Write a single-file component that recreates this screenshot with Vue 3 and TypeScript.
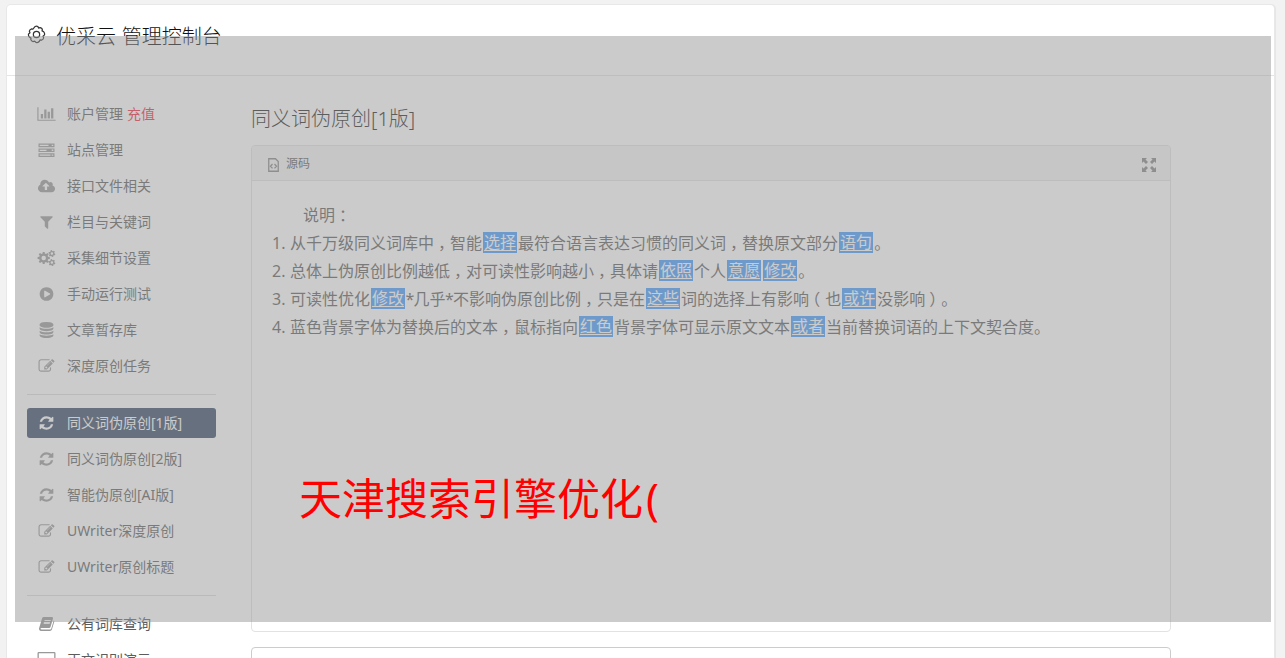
<template>
  <div class="page">
    <div class="panel">
      <header class="panel__header">
        <svg class="panel__logo" viewBox="0 0 20 20">
          <path d="M8.6 1.5Q10 .7 11.4 1.5L12.2 3.1L14 2.7Q15.7 3 16.1 4.5L15.9 6.2L17.6 7.2Q18.9 8.6 18.4 10.5L16.9 11.7L17.5 13.4Q17.2 15.2 15.6 15.8L13.8 15.6L12.8 17.4Q11.3 18.8 9.5 18.4L8 17L6.4 17.4Q4.6 17.1 4 15.4L4.2 13.8L2.5 12.7Q1.2 11.2 1.6 9.5L3.1 8.2L2.5 6.5Q2.8 4.8 4.5 4.2L6.2 4.4Z" />
          <circle cx="10" cy="10" r="3.3" />
        </svg>
        <h1 class="panel__title">优采云 管理控制台</h1>
      </header>

      <div class="panel__body">
        <nav class="menu">
          <div v-for="(group, index) in groups" :key="index" class="menu__group">
            <a
              v-for="item in group"
              :key="item.text"
              class="menu__item"
              :class="{ 'menu__item--active': item.text === current }"
              @click="current = item.text"
            >
              <svg class="menu__icon" :viewBox="icons[item.icon].box">
                <path :d="icons[item.icon].path" fill-rule="evenodd" />
              </svg>
              <span>{{ item.text }}</span>
              <span v-if="item.extra" class="menu__extra">{{ item.extra }}</span>
            </a>
          </div>
        </nav>

        <main class="content">
          <h2 class="content__title">同义词伪原创[1版]</h2>
          <section class="editor">
            <div class="editor__toolbar">
              <svg class="editor__source" viewBox="0 0 11 14">
                <path d="M.75.75H7.5L10.25 3.5V13.25H.75ZM4.5 6L2.5 8.2L4.5 10.4M6.5 6L8.5 8.2L6.5 10.4" />
              </svg>
              <span>源码</span>
              <svg class="editor__expand" viewBox="0 0 14 14">
                <path d="M0 0H5L3.5 1.5L6 4L4 6L1.5 3.5L0 5ZM14 0V5L12.5 3.5L10 6L8 4L10.5 1.5L9 0ZM0 14V9L1.5 10.5L4 8L6 10L3.5 12.5L5 14ZM14 14H9L10.5 12.5L8 10L10 8L12.5 10.5L14 9Z" />
              </svg>
            </div>
            <div class="editor__text">
              <p class="editor__intro">说明<span class="mid">：</span></p>
              <p v-for="(line, n) in lines" :key="n" class="editor__line">
                <span class="editor__number">{{ n + 1 }}.</span>
                <span
                  v-for="(part, i) in split(line)"
                  :key="i"
                  :class="part.kind"
                >{{ part.text }}</span>
              </p>
            </div>
          </section>
          <section class="result"></section>
        </main>
      </div>
    </div>

    <div class="cover">
      <span class="cover__text">天津搜索引擎优化<span class="cover__bracket">(</span></span>
    </div>
  </div>
</template>

<script setup lang="ts">
import { ref } from 'vue'

interface MenuItem {
  text: string
  icon: string
  extra?: string
}

interface Part {
  text: string
  kind: string
}

const current = ref('同义词伪原创[1版]')

const groups: MenuItem[][] = [
  [
    { text: '账户管理', icon: 'chart', extra: '充值' },
    { text: '站点管理', icon: 'server' },
    { text: '接口文件相关', icon: 'cloud' },
    { text: '栏目与关键词', icon: 'filter' },
    { text: '采集细节设置', icon: 'cogs' },
    { text: '手动运行测试', icon: 'play' },
    { text: '文章暂存库', icon: 'database' },
    { text: '深度原创任务', icon: 'edit' },
  ],
  [
    { text: '同义词伪原创[1版]', icon: 'refresh' },
    { text: '同义词伪原创[2版]', icon: 'refresh' },
    { text: '智能伪原创[AI版]', icon: 'refresh' },
    { text: 'UWriter深度原创', icon: 'edit' },
    { text: 'UWriter原创标题', icon: 'edit' },
  ],
  [
    { text: '公有词库查询', icon: 'book' },
    { text: '正文识别演示', icon: 'desktop' },
  ],
]

// {..} marks a replaced word
const lines = [
  '从千万级同义词库中，智能{选择}最符合语言表达习惯的同义词，替换原文部分{语句}。',
  '总体上伪原创比例越低，对可读性影响越小，具体请{依照}个人{意愿}{修改}。',
  '可读性优化{修改}*几乎*不影响伪原创比例，只是在{这些}词的选择上有影响（也{或许}没影响）。',
  '蓝色背景字体为替换后的文本，鼠标指向{红色}背景字体可显示原文文本{或者}当前替换词语的上下文契合度。',
]

const split = (line: string): Part[] =>
  line
    .split(/(\{.+?\}|[，（）*])/)
    .filter((s) => s !== '')
    .map((s) => {
      if (s.startsWith('{')) return { text: s.slice(1, -1), kind: 'word' }
      if (s === '，') return { text: s, kind: 'mid' }
      if (s === '（') return { text: s, kind: 'open' }
      if (s === '）') return { text: s, kind: 'close' }
      if (s === '*') return { text: s, kind: 'star' }
      return { text: s, kind: 'plain' }
    })

// closed outline of a toothed wheel with a round hole
const gear = (cx: number, cy: number, r: number, teeth: number, turn = 0) => {
  const step = (Math.PI * 2) / teeth
  const points: string[] = []
  for (let i = 0; i < teeth; i++) {
    const a = i * step + turn
    for (const [k, f] of [[-0.32, 0.74], [-0.2, 1], [0.2, 1], [0.32, 0.74]]) {
      const x = cx + Math.cos(a + k * step) * r * f
      const y = cy + Math.sin(a + k * step) * r * f
      points.push(`${x.toFixed(2)} ${y.toFixed(2)}`)
    }
  }
  const h = r * 0.36
  return `M${points.join('L')}ZM${cx - h} ${cy}a${h} ${h} 0 1 0 ${h * 2} 0a${h} ${h} 0 1 0 ${-h * 2} 0Z`
}

const icons: Record<string, { box: string; path: string }> = {
  chart: {
    box: '0 0 2048 1792',
    path: 'M640 896v512h-256v-512h256zm384-512v1024h-256v-1024h256zm1024 1152v128h-2048v-1536h128v1408h1920zm-640-896v768h-256v-768h256zm384-384v1152h-256v-1152h256z',
  },
  server: {
    box: '0 0 18 16',
    path: 'M1 1.5H17V5.2H1ZM2.2 2.8V4H11V2.8ZM14.2 2.7V4H15.8V2.7ZM1 6.4H17V10.1H1ZM2.2 7.7V8.9H9V7.7ZM14.2 7.6V8.9H15.8V7.6ZM1 11.3H17V15H1ZM2.2 12.6V13.8H13V12.6ZM14.2 12.5V13.8H15.8V12.5Z',
  },
  cloud: {
    box: '0 0 1920 1792',
    path: 'M1280 928q0-14-9-23l-352-352q-9-9-23-9t-23 9l-351 351q-10 12-10 24 0 14 9 23t23 9h224v352q0 13 9.5 22.5t22.5 9.5h192q13 0 22.5-9.5t9.5-22.5v-352h224q13 0 22.5-9.5t9.5-22.5zm640 288q0 159-112.5 271.5t-271.5 112.5h-1088q-185 0-316.5-131.5t-131.5-316.5q0-130 70-240t188-165q-2-30-2-43 0-212 150-362t362-150q156 0 285.5 87t188.5 231q71-62 166-62 106 0 181 75t75 181q0 76-41 138 130 31 213.5 135.5t83.5 238.5z',
  },
  filter: {
    box: '0 0 1792 1792',
    path: 'M1595 295q17 41-14 70l-493 493v742q0 42-39 59-13 5-25 5-27 0-45-19l-256-256q-19-19-19-45v-486l-493-493q-31-29-14-70 17-39 59-39h1280q42 0 59 39z',
  },
  cogs: {
    box: '0 0 18 16',
    path: gear(6.2, 8, 6.2, 8) + gear(14.4, 3.6, 3.5, 6, 0.3) + gear(14.4, 12.6, 3.5, 6, 0.3),
  },
  play: {
    box: '0 0 1792 1792',
    path: 'M896 128q209 0 385.5 103t279.5 279.5 103 385.5-103 385.5-279.5 279.5-385.5 103-385.5-103-279.5-279.5-103-385.5 103-385.5 279.5-279.5 385.5-103zm384 823q32-18 32-55t-32-55l-544-320q-31-19-64-1-32 19-32 56v640q0 37 32 56 16 8 32 8 17 0 32-9z',
  },
  database: {
    box: '0 0 1792 1792',
    path: 'M896 768q237 0 443-43t325-127v170q0 69-103 128t-280 93.5-385 34.5-385-34.5-280-93.5-103-128v-170q119 84 325 127t443 43zm0 768q237 0 443-43t325-127v170q0 69-103 128t-280 93.5-385 34.5-385-34.5-280-93.5-103-128v-170q119 84 325 127t443 43zm0-384q237 0 443-43t325-127v170q0 69-103 128t-280 93.5-385 34.5-385-34.5-280-93.5-103-128v-170q119 84 325 127t443 43zm0-1152q208 0 385 34.5t280 93.5 103 128v128q0 69-103 128t-280 93.5-385 34.5-385-34.5-280-93.5-103-128v-128q0-69 103-128t280-93.5 385-34.5z',
  },
  edit: {
    box: '0 0 1792 1792',
    path: 'M888 1184l116-116-152-152-116 116v56h96v96h56zm440-720q-16-16-33 1l-350 350q-17 17-1 33t33-1l350-350q17-17 1-33zm80 594v190q0 119-84.5 203.5t-203.5 84.5h-832q-119 0-203.5-84.5t-84.5-203.5v-832q0-119 84.5-203.5t203.5-84.5h832q63 0 117 25 15 7 18 23 3 17-9 29l-49 49q-14 14-32 8-23-6-45-6h-832q-66 0-113 47t-47 113v832q0 66 47 113t113 47h832q66 0 113-47t47-113v-126q0-13 9-22l64-64q15-15 35-7t20 29zm-96-738l288 288-672 672h-288v-288zm444 132l-92 92-288-288 92-92q28-28 68-28t68 28l152 152q28 28 28 68t-28 68z',
  },
  refresh: {
    box: '0 0 1792 1792',
    path: 'M1639 1056q0 5-1 7-64 268-268 434.5t-478 166.5q-146 0-282.5-55t-243.5-157l-129 129q-19 19-45 19t-45-19-19-45v-448q0-26 19-45t45-19h448q26 0 45 19t19 45-19 45l-137 137q71 66 161 102t187 36q134 0 250-65t186-179q11-17 53-117 8-23 30-23h192q13 0 22.5 9.5t9.5 22.5zm25-800v448q0 26-19 45t-45 19h-448q-26 0-45-19t-19-45 19-45l138-138q-148-137-349-137-134 0-250 65t-186 179q-11 17-53 117-8 23-30 23h-199q-13 0-22.5-9.5t-9.5-22.5v-7q65-268 270-434.5t480-166.5q146 0 284 55.5t245 156.5l130-129q19-19 45-19t45 19 19 45z',
  },
  book: {
    box: '0 0 16 16',
    path: 'M5.2 1H13.6Q14.8 1.2 14.5 2.4L12 11Q11.7 12 10.6 12H3Q1.9 12 2 12.8Q2.1 13.6 3.1 13.6H11.6Q12.5 13.6 12.8 12.6L15.2 4.4Q16 4.9 15.7 5.9L13.4 13.6Q12.9 15 11.4 15H2.8Q1.2 15 .6 13.4Q.3 12.4 .8 11.5L3.6 2.2Q4.1 1 5.2 1ZM6.2 4L5.9 5H12L12.3 4ZM5.4 6.6L5.1 7.6H11.2L11.5 6.6Z',
  },
  desktop: {
    box: '0 0 18 16',
    path: 'M1.3 0H16.7Q18 0 18 1.3V11.7Q18 13 16.7 13H11V14.5H12.5V16H5.5V14.5H7V13H1.3Q0 13 0 11.7V1.3Q0 0 1.3 0ZM1.3 1.3V10H16.7V1.3Z',
  },
}
</script>

<style>
body {
  margin: 0;
  overflow: hidden;
  background: #f2f2f2;
}
</style>

<style scoped>
.page {
  position: relative;
  box-sizing: border-box;
  height: 658px;
  padding: 5px 9px 0 7px;
  overflow: hidden;
  background: #f2f2f2;
  color: #5c5c5c;
  font-family: 'Noto Sans', 'Noto Sans CJK SC', sans-serif;
  font-size: 14px;
  font-weight: 400;
}

.panel {
  height: 700px;
  background: #fff;
  border-radius: 4px;
  box-shadow: 0 0 0 1px #e8e8e8, 1px 0 0 1px #e6e6e6;
  margin-right: 2px;
}

.panel__header {
  display: flex;
  box-sizing: border-box;
  height: 71px;
  padding: 20px 0 0 20px;
  border-bottom: 1px solid #e5e5e5;
}

.panel__logo {
  width: 19px;
  height: 19px;
  fill: none;
  stroke: #333;
  stroke-width: 1.3;
}

.panel__title {
  margin: -3px 0 0 10px;
  color: #111;
  font-size: 20px;
  font-weight: 300;
  line-height: 30px;
  word-spacing: 0.5px;
}

.panel__body {
  display: flex;
  padding: 23px 0 0 20px;
}

.menu {
  width: 189px;
  flex: none;
}

.menu__group {
  display: flex;
  flex-direction: column;
  gap: 6px;
}

.menu__group + .menu__group {
  margin-top: 13px;
  padding-top: 13px;
  border-top: 1px solid #ddd;
}

.menu__item {
  display: flex;
  align-items: center;
  height: 30px;
  padding-left: 10px;
  border-radius: 3px;
  line-height: 30px;
  white-space: nowrap;
  cursor: pointer;
}

.menu__item--active {
  background: #354967;
  color: #fff;
}

.menu__icon {
  width: 19px;
  height: 16px;
  margin-right: 11px;
  fill: #999;
}

.menu__item--active .menu__icon {
  fill: #fff;
}

.menu__extra {
  margin-left: 4px;
  color: #f3283c;
}

.content {
  width: 920px;
  margin-left: 35px;
}

.content__title {
  margin: 4px 0 11px;
  color: #222;
  font-size: 20px;
  font-weight: 300;
  line-height: 31px;
}

.editor {
  box-sizing: border-box;
  height: 487px;
  border: 1px solid #e2e2e2;
  border-radius: 4px;
}

.editor__toolbar {
  display: flex;
  align-items: center;
  height: 34px;
  padding: 0 14px 0 16px;
  background: #f5f5f5;
  border-bottom: 1px solid #e2e2e2;
  border-radius: 3px 3px 0 0;
  font-size: 12px;
}

.editor__source {
  width: 11px;
  height: 14px;
  margin: 3px 7px 0 0;
  fill: none;
  stroke: #858585;
  stroke-width: 1.3;
}

.editor__expand {
  width: 14px;
  height: 14px;
  margin: 3px 0 0 auto;
  fill: #858585;
}

.editor__text {
  padding: 20px;
  font-size: 16px;
  text-spacing-trim: space-all;
}

.editor__intro,
.editor__line {
  display: flex;
  align-items: center;
  height: 28px;
  margin: 0;
  line-height: 28px;
  white-space: nowrap;
}

.editor__intro {
  padding-left: 31px;
}

.editor__number {
  width: 18px;
}

.word {
  height: 21px;
  margin: -1px 1px 0;
  padding: 0 1px;
  background: #439dff;
  color: #fff;
  line-height: 21px;
  text-decoration: underline;
  text-underline-offset: 2px;
}

/* punctuation centred in its full-width cell */
.mid {
  padding-left: 4px;
  letter-spacing: -4px;
}

.open {
  width: 16px;
  text-indent: -5px;
}

.close {
  padding-left: 4px;
  letter-spacing: -4px;
}

.star {
  width: 7.5px;
  text-indent: -0.6px;
}

.result {
  height: 100px;
  margin-top: 15px;
  border: 1px solid #ccc;
  border-radius: 4px;
  box-sizing: border-box;
}

.cover {
  position: absolute;
  top: 36px;
  left: 15px;
  box-sizing: border-box;
  width: 1256px;
  height: 586px;
  padding: 432px 0 0 284px;
  background: rgba(151, 151, 151, 0.5);
}

.cover__text {
  color: #f00;
  font-size: 43px;
  line-height: 62px;
  white-space: nowrap;
}

.cover__bracket {
  margin-left: 3px;
}
</style>
